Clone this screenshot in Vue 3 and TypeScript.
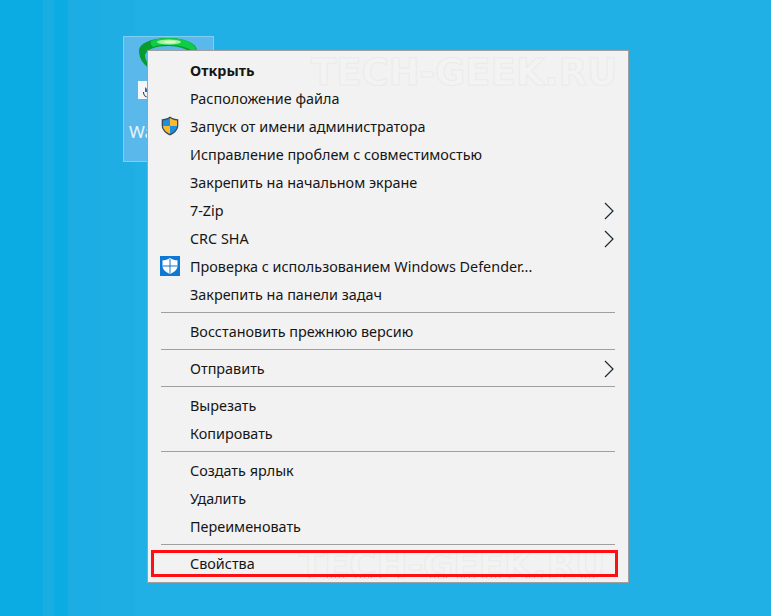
<template>
  <div class="desktop">
    <div class="file-icon">
      <svg class="ring" width="60" height="32" viewBox="0 0 60 32">
        <path d="M0 13C0 5 13 0 29 0C45 0 58 5 58 13C58 15 57 17 56 19C52 12 42 8 29 8C17 8 8 11 6 17C6 21 8 25 13 29L10 30C4 26 0 20 0 13Z" fill="#089c2c" />
        <path d="M12 3C17 1 23 0 29 0C42 0 52 3 56 9C57 11 57 13 56 16C52 10 42 7 29 7C24 7 18 7 14 9C12 7 11 5 12 3Z" fill="#0ccf47" />
        <ellipse cx="30" cy="4" rx="12" ry="2.500" fill="#a8f0a0" />
        <ellipse cx="31" cy="4" rx="6" ry="1.500" fill="#d8f8c8" />
      </svg>
      <div class="thumb">
        <svg width="9" height="15" viewBox="0 0 9 15">
          <path d="M5 1C7 3 7 5 5 7L7 9H2V4L4 6C4 4 4 3 4 1Z" fill="#1d6fb5" />
          <path d="M1 9C1 12 3 14 6 14C3 15 0 13 0 9Z" fill="#14406e" />
        </svg>
      </div>
      <span class="file-name">Wa</span>
    </div>

    <div class="menu">
      <div class="watermark top">TECH-GEEK.RU</div>
      <div class="watermark bottom">TECH-GEEK.RU</div>

      <template v-for="(group, i) in groups" :key="i">
        <div v-if="i > 0" class="separator"></div>
        <div v-for="item in group" :key="item.label" class="item" :class="{ bold: item.bold }">
          <svg v-if="item.icon === 'uac'" class="item-icon uac" width="18" height="20" viewBox="0 0 18 20">
            <path d="M9 .5C6.500 2.500 3.500 3.200 .7 3.200V9.500C.7 14 4.500 17.500 9 19.500C13.500 17.500 17.300 14 17.300 9.500V3.200C14.500 3.200 11.500 2.500 9 .5Z" fill="#3a4a5c" />
            <path d="M9 2V10H2V4.400C4.500 4.300 7 3.500 9 2Z" fill="#1d8fe0" />
            <path d="M9 2C11 3.500 13.500 4.300 16 4.400V10H9Z" fill="#fbb92c" />
            <path d="M2 10H9V18C5.500 16.300 2 13.500 2 10Z" fill="#fbb92c" />
            <path d="M9 10H16C16 13.500 12.500 16.300 9 18Z" fill="#1d8fe0" />
          </svg>
          <svg v-else-if="item.icon === 'defender'" class="item-icon" width="20" height="20" viewBox="0 0 20 20">
            <rect width="20" height="20" fill="#0f78d4" />
            <path d="M10 2C8 3.500 5 4.300 2.500 4.300V10C2.500 13.500 6 16.500 10 18C14 16.500 17.500 13.500 17.500 10V4.300C15 4.300 12 3.500 10 2Z" fill="#fff" />
            <path d="M9.500 3H10.500V17.500H9.500ZM2.500 9.500H17.500V10.500H2.500Z" fill="#0f78d4" />
          </svg>
          <span class="label">{{ item.label }}</span>
          <svg v-if="item.sub" class="arrow" width="10" height="18" viewBox="0 0 10 18">
            <path d="M1 1L9 9L1 17" fill="none" stroke="#1b2a33" stroke-width="1.200" />
          </svg>
        </div>
      </template>

      <svg class="specks" width="360" height="2" viewBox="0 0 360 2">
        <rect v-for="x in specks" :key="x" :x="x" y="0" width="1" height="2" fill="#e8d02a" />
      </svg>
      <div class="highlight"></div>
    </div>
  </div>
</template>

<script setup lang="ts">
type MenuItem = {
  label: string;
  bold?: boolean;
  sub?: boolean;
  icon?: "uac" | "defender";
};

const groups: MenuItem[][] = [
  [
    { label: "Открыть", bold: true },
    { label: "Расположение файла" },
    { label: "Запуск от имени администратора", icon: "uac" },
    { label: "Исправление проблем с совместимостью" },
    { label: "Закрепить на начальном экране" },
    { label: "7-Zip", sub: true },
    { label: "CRC SHA", sub: true },
    { label: "Проверка с использованием Windows Defender...", icon: "defender" },
    { label: "Закрепить на панели задач" },
  ],
  [{ label: "Восстановить прежнюю версию" }],
  [{ label: "Отправить", sub: true }],
  [{ label: "Вырезать" }, { label: "Копировать" }],
  [{ label: "Создать ярлык" }, { label: "Удалить" }, { label: "Переименовать" }],
  [{ label: "Свойства" }],
];

// little yellow ticks under the red frame, x from the left of the row
const specks = [
  0, 18, 22, 26, 30, 34, 46, 51, 55, 59, 62, 71, 89, 121, 125, 129, 134, 137,
  148, 152, 155, 160, 165, 173, 177, 182, 186, 190, 200, 217, 220, 225, 232,
  240, 255, 272, 276, 280, 284,
];
</script>

<style scoped>
.desktop {
  position: relative;
  width: 771px;
  height: 616px;
  overflow: hidden;
  background: linear-gradient(
    90deg,
    #0bace4 0 43px,
    #1aade2 43px 54px,
    #0bace4 54px 68px,
    #1badE3 68px 100px,
    #1eaee4 100px 135px,
    #20b0e6 135px
  );
  font-family: "Noto Sans", "Liberation Sans", sans-serif;
}

.file-icon {
  position: absolute;
  left: 123px;
  top: 36px;
  width: 91px;
  height: 126px;
  box-sizing: border-box;
  border: 1px solid #80cff0;
  background: #5ab9ea;
}

.ring {
  position: absolute;
  left: 15px;
  top: 1px;
}

.thumb {
  position: absolute;
  left: 14px;
  top: 44px;
  width: 16px;
  height: 18px;
  box-sizing: border-box;
  display: flex;
  align-items: center;
  padding-left: 5px;
  background: #f4f6f8;
}

.file-name {
  position: absolute;
  left: 5px;
  top: 83px;
  color: #e6f5fd;
  font-size: 17px;
}

.menu {
  position: absolute;
  left: 147px;
  top: 50px;
  width: 482px;
  box-sizing: border-box;
  padding: 6px 2px 4px;
  border: 1px solid #a0a0a0;
  background: #f2f2f2;
  color: #161616;
  font-size: 14.4px;
}

.item {
  position: relative;
  height: 28px;
  display: flex;
  align-items: center;
  padding-left: 40px;
  white-space: nowrap;
}

.label {
  position: relative;
  top: -1px;
}

.bold {
  font-weight: 700;
}

.item-icon {
  position: absolute;
  left: 10px;
  top: 3px;
}

.uac {
  left: 11px;
}

.arrow {
  position: absolute;
  right: 12px;
  top: 5px;
}

.separator {
  height: 1px;
  margin: 3px 11px 5px 11px;
  background: #a0a0a0;
}

.watermark {
  position: absolute;
  left: 163px;
  font-family: "DejaVu Sans", sans-serif;
  font-size: 37px;
  font-weight: 700;
  line-height: 28px;
  color: #f3f3f3;
  -webkit-text-stroke: 1px #ebebeb;
  white-space: nowrap;
}

.top {
  top: 8px;
}

.bottom {
  left: 151px;
  top: 501px;
}

.specks {
  position: absolute;
  left: 161px;
  top: 525px;
}

.highlight {
  position: absolute;
  left: 3px;
  top: 499px;
  width: 467px;
  height: 27px;
  border: 3px solid #ff0f14;
  box-sizing: border-box;
}
</style>
